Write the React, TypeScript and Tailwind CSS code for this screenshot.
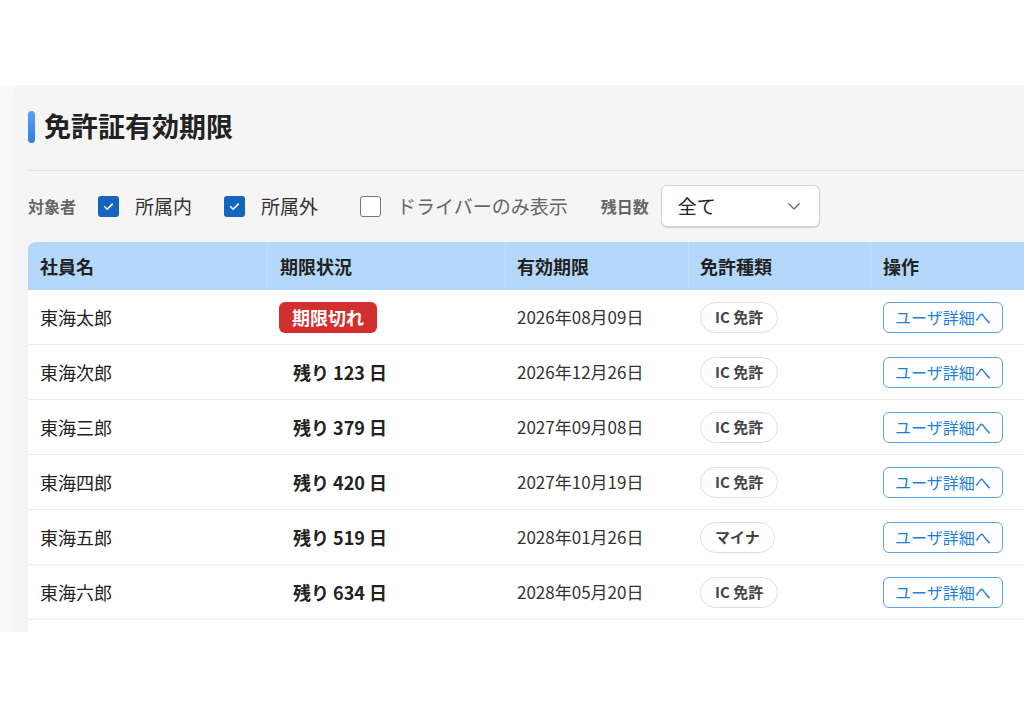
import React from "react";

type Row = { name: string; status: string | null; expired?: boolean; date: string; kind: string };

const rows: Row[] = [
  { name: "東海太郎", status: null, expired: true, date: "2026年08月09日", kind: "IC 免許" },
  { name: "東海次郎", status: "残り 123 日", date: "2026年12月26日", kind: "IC 免許" },
  { name: "東海三郎", status: "残り 379 日", date: "2027年09月08日", kind: "IC 免許" },
  { name: "東海四郎", status: "残り 420 日", date: "2027年10月19日", kind: "IC 免許" },
  { name: "東海五郎", status: "残り 519 日", date: "2028年01月26日", kind: "マイナ" },
  { name: "東海六郎", status: "残り 634 日", date: "2028年05月20日", kind: "IC 免許" },
  { name: "東海七郎", status: "残り 702 日", date: "2028年07月28日", kind: "IC 免許" },
];

const font = { fontFamily: '"Noto Sans CJK JP", "Noto Sans", sans-serif' };

function Check({ checked }: { checked: boolean }) {
  return checked ? (
    <span className="flex h-[21px] w-[21px] items-center justify-center rounded-[3px] bg-[#1565c0]">
      <svg width="13" height="13" viewBox="0 0 24 24" fill="none" stroke="white" strokeWidth="3" strokeLinecap="round" strokeLinejoin="round">
        <path d="M5 12.5l4.5 4.5L19 7.5" />
      </svg>
    </span>
  ) : (
    <span className="block h-[21px] w-[21px] rounded-[3px] border-[1.5px] border-[#777] bg-white" />
  );
}

export default function App() {
  return (
    <div className="h-[717px] w-full overflow-hidden bg-white" style={font}>
      <div className="h-[85px]" />
      <div className="flex h-[547px] overflow-hidden">
        <div className="w-[12px] shrink-0 bg-[#f9f9f9]" />
        <div className="w-[1100px] shrink-0 rounded-tl-lg bg-[#f5f5f5] pl-[16px]">
          <div className="flex h-[86px] items-center gap-[9px] border-b border-[#e3e3e3] pb-[2px]">
            <span className="block h-[32px] w-[7px] rounded-full bg-gradient-to-b from-[#5aa0f5] to-[#2f7ce8]" />
            <h1 className="text-[27px] font-bold text-[#222]">免許証有効期限</h1>
          </div>
          <div className="flex h-[70px] items-center">
            <span className="text-[16px] font-bold text-[#666]">対象者</span>
            <span className="ml-[22px]"><Check checked /></span>
            <span className="ml-[16px] text-[19px] text-[#333]">所属内</span>
            <span className="ml-[32px]"><Check checked /></span>
            <span className="ml-[16px] text-[19px] text-[#333]">所属外</span>
            <span className="ml-[42px]"><Check checked={false} /></span>
            <span className="ml-[16px] text-[19px] text-[#666]">ドライバーのみ表示</span>
            <span className="ml-[33px] text-[16px] font-bold text-[#666]">残日数</span>
            <div className="ml-[12px] flex h-[42px] w-[159px] items-center justify-between rounded-md border border-[#d4d4d4] bg-white pl-[16px] pr-[16px] shadow-[0_1px_1px_rgba(0,0,0,0.15)]">
              <span className="text-[19px] text-[#222]">全て</span>
              <svg width="18" height="18" viewBox="0 0 24 24" fill="none" stroke="#666" strokeWidth="1.6" strokeLinecap="round" strokeLinejoin="round">
                <path d="M5 9l7 7 7-7" />
              </svg>
            </div>
          </div>
          <div className="mt-[1px] w-[1060px] overflow-hidden rounded-tl-lg">
            <div className="grid h-[48px] grid-cols-[240px_238px_183px_182px_217px] bg-[#b4d8fb] text-[18px] font-bold text-[#222]">
              <div className="flex items-center border-r border-[#c2dffb] pl-[12px]">社員名</div>
              <div className="flex items-center border-r border-[#c2dffb] pl-[12px]">期限状況</div>
              <div className="flex items-center border-r border-[#c2dffb] pl-[11px]">有効期限</div>
              <div className="flex items-center border-r border-[#c2dffb] pl-[11px]">免許種類</div>
              <div className="flex items-center pl-[12px]">操作</div>
            </div>
            {rows.map((r) => (
              <div key={r.name} className="grid h-[55px] grid-cols-[240px_238px_183px_182px_217px] border-b border-[#ececec] bg-white">
                <div className="flex items-center pl-[12px] text-[18px] text-[#222]">{r.name}</div>
                <div className="flex items-center pl-[11px]">
                  {r.expired ? (
                    <span className="flex h-[31px] items-center rounded-md bg-[#d32f2f] px-[13px] text-[18px] font-bold text-white">期限切れ</span>
                  ) : (
                    <span className="px-[14px] text-[18px] font-bold text-[#222]">{r.status}</span>
                  )}
                </div>
                <div className="flex items-center pl-[11px] text-[17px] text-[#333]">{r.date}</div>
                <div className="flex items-center pl-[11px]">
                  <span className="flex h-[31px] items-center rounded-full border border-[#e0e0e0] bg-white px-[14px] text-[15px] font-bold text-[#444]">{r.kind}</span>
                </div>
                <div className="flex items-center pl-[12px]">
                  <span className="flex h-[31px] items-center rounded-md border border-[#5aa4ec] bg-white px-[11px] text-[16px] text-[#1e7fd8]">ユーザ詳細へ</span>
                </div>
              </div>
            ))}
          </div>
        </div>
      </div>
    </div>
  );
}
